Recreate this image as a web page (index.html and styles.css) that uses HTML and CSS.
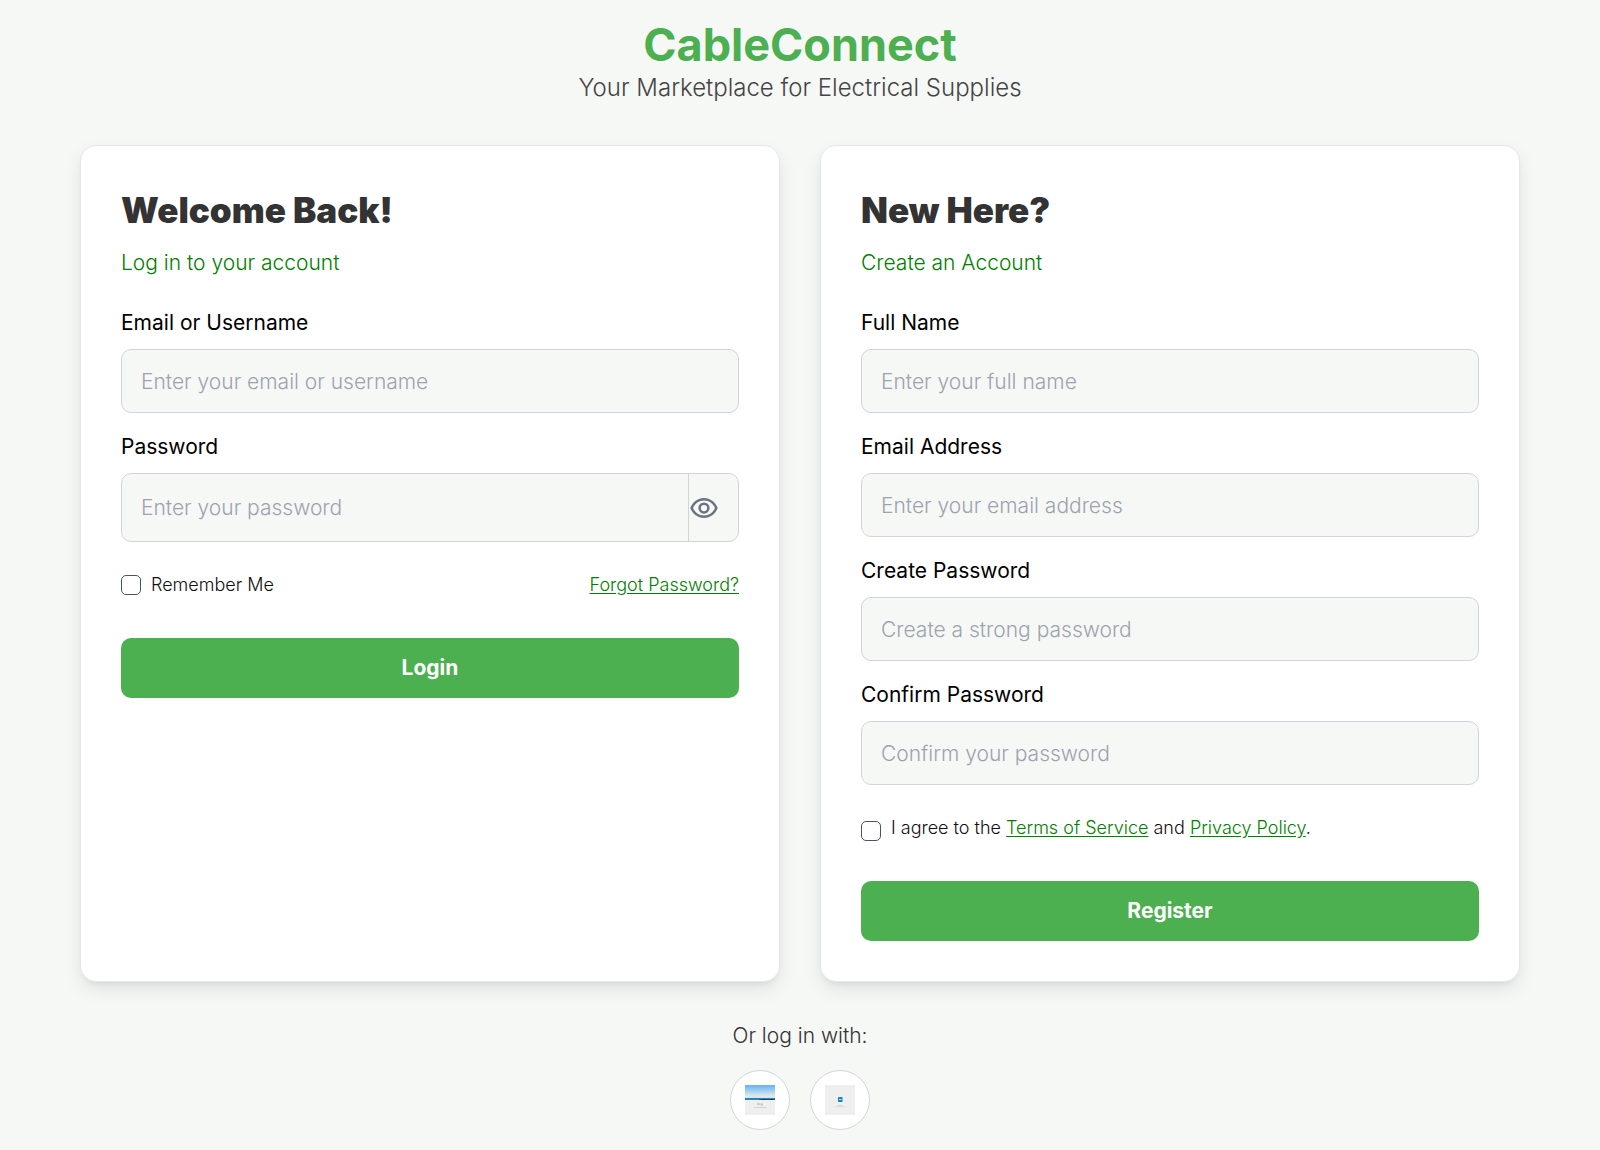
FILE: index.html
```html
<!DOCTYPE html>
<html lang="en">
<head>
<meta charset="utf-8">
<meta name="viewport" content="width=device-width, initial-scale=1">
<title>CableConnect</title>
<link rel="stylesheet" href="styles.css">
</head>
<body>
<header class="masthead">
  <h1 class="brand">CableConnect</h1>
  <p class="tagline">Your Marketplace for Electrical Supplies</p>
</header>
<main class="panels">
  <section class="card">
    <h2 class="card-title">Welcome Back!</h2>
    <p class="card-subtitle">Log in to your account</p>
    <form class="form">
      <div class="field">
        <label class="label" for="login-email">Email or Username</label>
        <input class="input" id="login-email" type="text" placeholder="Enter your email or username">
      </div>
      <div class="field">
        <label class="label" for="login-password">Password</label>
        <div class="password">
          <input class="password-input" id="login-password" type="password" placeholder="Enter your password">
          <button class="reveal" type="button" aria-label="Show password">
            <svg class="eye" viewBox="0 0 24 24" aria-hidden="true"><path fill="currentColor" d="M12 4c5 0 9.200 3.400 11 8-1.800 4.600-6 8-11 8S2.800 16.600 1 12C2.800 7.400 7 4 12 4Zm0 14c4.100 0 7.300-2.500 8.800-6C19.300 8.500 16.100 6 12 6S4.700 8.500 3.200 12c1.500 3.500 4.700 6 8.800 6Zm0-1.500a4.500 4.500 0 1 1 0-9 4.500 4.500 0 0 1 0 9Zm0-2a2.500 2.500 0 1 0 0-5 2.500 2.500 0 0 0 0 5Z"/></svg>
          </button>
        </div>
      </div>
      <div class="options">
        <label class="check"><input class="checkbox" type="checkbox"><span>Remember Me</span></label>
        <a class="link" href="#forgot">Forgot Password?</a>
      </div>
      <button class="submit" type="submit">Login</button>
    </form>
  </section>
  <section class="card">
    <h2 class="card-title">New Here?</h2>
    <p class="card-subtitle">Create an Account</p>
    <form class="form">
      <div class="field">
        <label class="label" for="full-name">Full Name</label>
        <input class="input" id="full-name" type="text" placeholder="Enter your full name">
      </div>
      <div class="field">
        <label class="label" for="email">Email Address</label>
        <input class="input" id="email" type="email" placeholder="Enter your email address">
      </div>
      <div class="field">
        <label class="label" for="new-password">Create Password</label>
        <input class="input" id="new-password" type="password" placeholder="Create a strong password">
      </div>
      <div class="field">
        <label class="label" for="confirm-password">Confirm Password</label>
        <input class="input" id="confirm-password" type="password" placeholder="Confirm your password">
      </div>
      <div class="options">
        <div class="check check-terms">
          <input class="checkbox" id="terms" type="checkbox">
          <label for="terms">I agree to the <a class="link" href="#terms-of-service">Terms of Service</a> and <a class="link" href="#privacy">Privacy Policy</a>.</label>
        </div>
      </div>
      <button class="submit" type="submit">Register</button>
    </form>
  </section>
</main>
<footer class="social">
  <p class="social-text">Or log in with:</p>
  <div class="social-list">
    <button class="social-button" type="button" aria-label="Log in with Google">
      <svg class="social-picture" viewBox="0 0 30 30" aria-hidden="true">
        <defs><linearGradient id="sky" x2="0" y2="1"><stop stop-color="#69b0ee"/><stop offset=".5" stop-color="#a9d3f3"/><stop offset=".85" stop-color="#e0e9ea"/><stop offset="1" stop-color="#d8e2e6"/></linearGradient></defs>
        <path fill="#efefef" d="M0 0h30v30H0z"/><path fill="url(#sky)" d="M0 0h30v13H0z"/>
        <path fill="#2588bd" d="M0 13h30v2H0z"/><path fill="#203e50" d="M14 14.500l5-.4 4 .2 3-.3 4 .3v.7H14z"/>
        <path fill="#c2cbe0" d="M12 18h2v2h-2z"/><path fill="#e5b9b5" d="M14 18.500h1.500V20H14z"/><path fill="#b3c7df" d="M16 18.500h2v2h-2z"/>
        <path fill="#d4d4d4" d="M8.500 22h13v1h-13z"/>
      </svg>
    </button>
    <button class="social-button" type="button" aria-label="Log in with LinkedIn">
      <svg class="social-picture" viewBox="0 0 30 30" aria-hidden="true">
        <path fill="#efefef" d="M0 0h30v30H0z"/><rect x="13" y="12" width="4.500" height="5" rx=".5" fill="#148bb5"/><path fill="#b5dae7" d="M14 14h2.500v1H14z"/><path fill="#c7c7c7" d="M13.500 20h3v.7h-3z"/><path fill="#dadada" d="M10.500 21h9v1h-9z"/>
      </svg>
    </button>
  </div>
</footer>
</body>
</html>
```
FILE: styles.css
```css
* { box-sizing: border-box; }
body {
  margin: 0;
  padding: 20px 80px;
  background: #f6f8f6;
  color: #111;
  font: 300 21px/28px Inter, "Open Sans", sans-serif;
}
h1, h2, p { margin: 0; }
input, button { font: inherit; }
.masthead { margin-bottom: 40px; text-align: center; }
.brand { color: #4caf50; font-size: 45px; font-weight: 700; line-height: 50px; }
.tagline { color: #444; font-size: 24px; line-height: 35px; }
.panels { display: grid; grid-template-columns: 1fr 1fr; gap: 40px; }
.card {
  padding: 40px;
  border: 1px solid #e5e7eb;
  border-radius: 16px;
  background: #fff;
  box-shadow: 0 8px 20px -2px rgb(0 0 0 / 10%), 0 4px 6px -4px rgb(0 0 0 / 10%);
}
.card-title { color: #333; font-size: 35px; font-weight: 900; line-height: 48px; }
.card-subtitle { margin: 15px 0 32px; color: #008000; }
.form { display: flex; flex-direction: column; gap: 20px; }
.field { display: flex; flex-direction: column; gap: 12px; }
.label { color: #000; font-weight: 400; }
.input, .password { border: 1px solid #d1d5db; border-radius: 10px; background: #f6f8f6; }
.input { width: 100%; height: 64px; padding: 0 19px; }
.input::placeholder, .password-input::placeholder { color: #9ca3af; opacity: 1; }
.password { display: flex; height: 69px; overflow: hidden; }
.password-input { flex: 1; min-width: 0; padding: 0 19px; border: 0; background: none; }
.reveal { width: 50px; padding: 0; border: 0; border-left: 1px solid #d1d5db; background: none; color: #6b7280; text-align: left; }
.eye { display: block; width: 30px; height: 30px; }
.options { display: flex; align-items: center; justify-content: space-between; margin: 10px 0 20px; font-size: 18px; line-height: 26px; }
.check { display: flex; align-items: center; gap: 10px; }
.check-terms { align-items: flex-end; }
.checkbox { appearance: none; flex: none; width: 20px; height: 20px; margin: 0; border: 1px solid #475569; border-radius: 5px; background: #fff; }
.checkbox:checked { background: #4caf50; }
.link { color: #008000; text-underline-offset: 2px; }
.submit { height: 60px; padding: 0; border: 0; border-radius: 10px; background: #4caf50; color: #fff; font-weight: 700; }
.social { margin-top: 40px; text-align: center; }
.social-text { color: #333; }
.social-list { display: flex; justify-content: center; gap: 20px; margin-top: 20px; }
.social-button { display: grid; place-items: center; width: 60px; height: 60px; padding: 0; border: 1px solid #d1d5db; border-radius: 50%; background: #fff; }
.social-picture { width: 30px; height: 30px; }
```
